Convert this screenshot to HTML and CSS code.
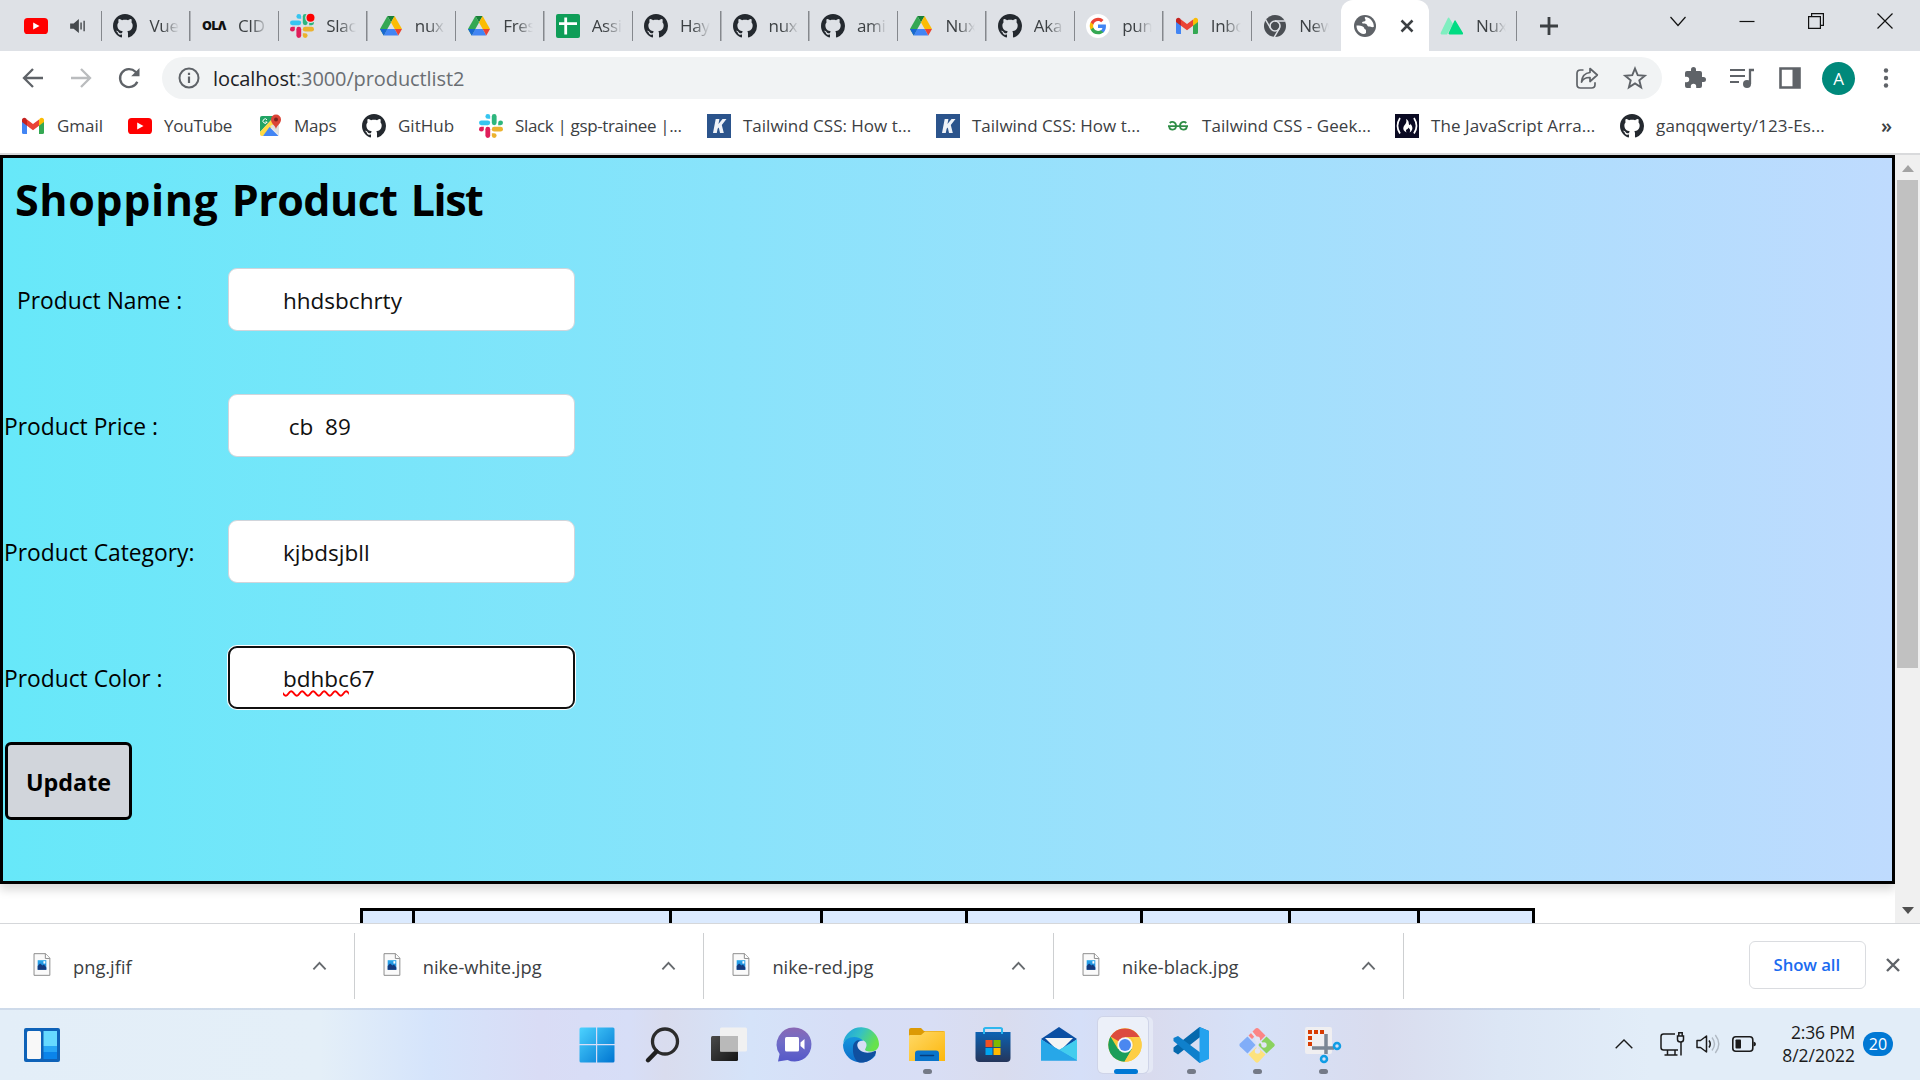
FILE: index.html
```html
<!DOCTYPE html>
<html lang="en">
<head>
<meta charset="utf-8">
<title>localhost:3000/productlist2</title>
<link rel="stylesheet" href="styles.css">
</head>
<body>
<svg class="defs" width="0" height="0" aria-hidden="true">
  <defs>
    <linearGradient id="g-win" x1="0" y1="0" x2="1" y2="1"><stop offset="0" stop-color="#4cd3ff"/><stop offset="1" stop-color="#0075d1"/></linearGradient>
    <linearGradient id="g-dark" x1="0" y1="0" x2="1" y2="1"><stop offset="0" stop-color="#4a4a4a"/><stop offset="1" stop-color="#151515"/></linearGradient>
    <linearGradient id="g-chat" x1="0" y1="0" x2="0" y2="1"><stop offset="0" stop-color="#8a68b4"/><stop offset=".45" stop-color="#6f6cc8"/><stop offset="1" stop-color="#5558c8"/></linearGradient>
    <linearGradient id="g-edge" x1="0" y1="0" x2="1" y2=".4"><stop offset="0" stop-color="#1b9de2"/><stop offset=".5" stop-color="#35c1c4"/><stop offset="1" stop-color="#66e24c"/></linearGradient>
    <linearGradient id="g-edge2" x1="0" y1="0" x2="0" y2="1"><stop offset="0" stop-color="#1595dd"/><stop offset="1" stop-color="#0c6cc9"/></linearGradient>
    <linearGradient id="g-folder" x1="0" y1="0" x2="1" y2="1"><stop offset="0" stop-color="#ffd968"/><stop offset="1" stop-color="#fcb70c"/></linearGradient>
    <linearGradient id="g-store" x1="0" y1="0" x2="0" y2="1"><stop offset="0" stop-color="#0c62b3"/><stop offset="1" stop-color="#25355a"/></linearGradient>
    <linearGradient id="g-mail" x1="0" y1="0" x2="1" y2="1"><stop offset="0" stop-color="#37c2f3"/><stop offset="1" stop-color="#1b86dc"/></linearGradient>
    <linearGradient id="g-pic" x1="0" y1="0" x2="0" y2="1"><stop offset="0" stop-color="#29a8ec"/><stop offset="1" stop-color="#1577cf"/></linearGradient>
    <symbol id="youtube" viewBox="0 0 24 24"><rect y="4" width="24" height="16" rx="3.6" fill="#f00"/><path d="M9.2 8.6v6.8l6.3-3.4z" fill="#fff"/></symbol>
    <symbol id="github" viewBox="0 0 16 16"><path fill="#24292f" d="M8 0C3.58 0 0 3.58 0 8c0 3.54 2.29 6.53 5.47 7.59.4.07.55-.17.55-.38 0-.19-.01-.82-.01-1.49-2.01.37-2.53-.49-2.69-.94-.09-.23-.48-.94-.82-1.13-.28-.15-.68-.52-.01-.53.63-.01 1.08.58 1.23.82.72 1.21 1.87.87 2.33.66.07-.52.28-.87.51-1.07-1.78-.2-3.64-.89-3.64-3.95 0-.87.31-1.59.82-2.15-.08-.2-.36-1.02.08-2.12 0 0 .67-.21 2.2.82.64-.18 1.32-.27 2-.27s1.36.09 2 .27c1.53-1.04 2.2-.82 2.2-.82.44 1.1.16 1.92.08 2.12.51.56.82 1.27.82 2.15 0 3.07-1.87 3.75-3.65 3.95.29.25.54.73.54 1.48 0 1.07-.01 1.93-.01 2.2 0 .21.15.46.55.38A8.01 8.01 0 0 0 16 8c0-4.42-3.58-8-8-8z"/></symbol>
    <symbol id="slack" viewBox="0 0 24 24"><g fill="#36c5f0"><path d="M8.8 0a2.4 2.4 0 0 0 0 4.8h2.4V2.4A2.4 2.4 0 0 0 8.8 0z"/><rect y="6.4" width="11.2" height="4.8" rx="2.4"/></g><g fill="#2eb67d"><path d="M24 8.8a2.4 2.4 0 0 0-4.8 0v2.4h2.4A2.4 2.4 0 0 0 24 8.8z"/><rect x="12.8" width="4.8" height="11.2" rx="2.4"/></g><g fill="#ecb22e"><path d="M15.2 24a2.4 2.4 0 0 0 0-4.8h-2.4v2.4a2.4 2.4 0 0 0 2.4 2.4z"/><rect x="12.8" y="12.8" width="11.2" height="4.8" rx="2.4"/></g><g fill="#e01e5a"><path d="M0 15.2a2.4 2.4 0 0 0 4.8 0v-2.4H2.4A2.4 2.4 0 0 0 0 15.2z"/><rect x="6.4" y="12.8" width="4.8" height="11.2" rx="2.4"/></g></symbol>
    <symbol id="drive" viewBox="0 0 24 24"><path d="M8.4 2h7.2L12 8.6z" fill="#188038"/><path d="M8.4 2 12 8.600 4.700 21.400 1 15z" fill="#34a853"/><path d="M15.600 2 23 15h-7.300L12 8.600z" fill="#fbbc04"/><path d="M8.400 15h7.300l3.600 6.400H4.700z" fill="#4285f4"/><path d="M8.400 15H1l3.700 6.400z" fill="#1967d2"/><path d="M15.700 15H23l-3.700 6.400z" fill="#ea4335"/></symbol>
    <symbol id="sheet" viewBox="0 0 24 24"><rect width="24" height="24" rx="2" fill="#0f9d58"/><path d="M9.7 3.5v17M3 9.700h18" stroke="#fff" stroke-width="2.800"/></symbol>
    <symbol id="google" viewBox="0 0 24 24"><circle cx="12" cy="12" r="12" fill="#fff"/><g transform="translate(3 3) scale(.75)"><path fill="#4285f4" d="M22.600 12.300c0-.8-.1-1.600-.2-2.300H12v4.500h5.900a5.100 5.100 0 0 1-2.200 3.300v2.800h3.600c2.100-1.900 3.300-4.800 3.300-8.300z"/><path fill="#34a853" d="M12 23c3 0 5.500-1 7.300-2.700l-3.600-2.800c-1 .7-2.200 1.100-3.700 1.100-2.900 0-5.300-1.900-6.200-4.500H2.200V17A11 11 0 0 0 12 23z"/><path fill="#fbbc05" d="M5.800 14.100a6.600 6.600 0 0 1 0-4.200V7.100H2.200a11 11 0 0 0 0 9.900z"/><path fill="#ea4335" d="M12 5.400c1.600 0 3.100.6 4.200 1.600l3.200-3.100A11 11 0 0 0 2.200 7.100l3.600 2.800C6.700 7.300 9.100 5.400 12 5.400z"/></g></symbol>
    <symbol id="gmail" viewBox="0 0 24 24"><path d="M1 6v12.500A1.500 1.500 0 0 0 2.500 20H6V9.500z" fill="#4285f4"/><path d="M18 9.500V20h3.500a1.500 1.500 0 0 0 1.500-1.500V6z" fill="#34a853"/><path d="M18 5.500v6.300L23 8V6c0-2-2.200-3-3.800-1.800z" fill="#fbbc04"/><path d="M6 11.800V5.500l6 4.500 6-4.500v6.300l-6 4.500z" fill="#ea4335"/><path d="M1 6v2l5 3.800V5.500L4.800 4.200C3.200 3 1 4 1 6z" fill="#c5221f"/></symbol>
    <symbol id="chrome-gray" viewBox="0 0 24 24"><circle cx="12" cy="12" r="11" fill="#4b4f54"/><circle cx="12" cy="12" r="5" fill="none" stroke="#dee1e6" stroke-width="1.600"/><path d="M12 7h10M7.700 14.500l-5-8.700M16.300 14.500l-5 8.700" stroke="#dee1e6" stroke-width="1.500"/></symbol>
    <symbol id="globe" viewBox="0 0 24 24"><circle cx="12" cy="12" r="11" fill="#5f6368"/><path fill="#fff" d="M3.500 11.500c3 .2 5.500 0 7 1.500 1 1 .5 2.200 2 2.500.8.200.5 2 .5 3.500-2 2.500-7 0-8.500-3-.8-1.500-1-3-1-4.500zM12 3c-1 1.500 1 2 .5 3.500s-3 .5-3.500 2c0 1.500 2.500 1 4 1.500s1 2.500 3 2.500 2 1 4.800.5c.4-4.500-3.300-9.800-8.800-10z"/></symbol>
    <symbol id="nuxt" viewBox="0 0 24 24"><path d="M9 3.500 13 10 7 20.500H1.500Q0 20 .8 18.500L7.600 4.500Q8.300 3.200 9 3.500z" fill="#80eec0"/><path d="M15.500 6.500 23 19q.5 1.500-1 1.500H9.500Q8 20 8.700 18.800L14.300 7q.600-1 1.200-.5z" fill="#00dc82"/></symbol>
    <symbol id="maps" viewBox="0 0 24 24"><rect x="2" y="2" width="19" height="20" rx="2" fill="#eee"/><path d="M4 2h13L2 18V4q0-2 2-2z" fill="#21a464"/><path d="M2 18 15 4l4 4L5 22H4q-2 0-2-2z" fill="#ffda45"/><path d="m11.500 13 9 9H5z" fill="#4285f4"/><path d="m12 12 9-4v13z" fill="#e0e0e0"/><path d="M18 15c-.7-4-5-5-5-9.500a5 5 0 0 1 10 0C23 10 18.700 11 18 15z" fill="#db4437"/><circle cx="18" cy="5.500" r="2" fill="#7b231e"/><path d="M9 5.800A2.200 2.200 0 1 0 9.200 8H7.300" fill="none" stroke="#fff"/></symbol>
    <symbol id="kinsta" viewBox="0 0 24 24"><rect width="24" height="24" fill="#2b548c"/><path d="M8.700 5h3.700l-.9 5 4-5h4l-4.700 5.900 2 8.100h-3.800l-1.200-5.500-1.200 1.200-.8 4.300H6z" fill="#eef2f7"/></symbol>
    <symbol id="gfg" viewBox="0 0 24 24"><path d="M2 12.200h20M3.700 9c2-2 6.300-1.300 6.300 2.800 0 5-6.300 5-6.800.8M20.300 9c-2-2-6.300-1.300-6.300 2.800 0 5 6.300 5 6.800.8" fill="none" stroke="#2f8d46" stroke-width="1.800"/></symbol>
    <symbol id="fcc" viewBox="0 0 24 24"><rect width="24" height="24" fill="#0a0a23"/><path d="M5 4q-5 8 0 15.500M19 4q5 8 0 15.500" fill="none" stroke="#fff" stroke-width="1.700"/><path d="M11 5c4 2 2 5 3.500 6 .8.300 1-.7.800-1.500 4 5 1.500 7.500-.7 9 1.300-2.700 0-3.800-1.300-5 .2 2-2.500 1.300-2.300 3.300 0 .8.300 1.300.7 1.700-3.700-1.500-4.400-4.500-2-7.500 1.800-2.300 2.100-3.500 1.300-6z" fill="#fff"/></symbol>
    <symbol id="picture" viewBox="0 0 18 24"><path d="M.7.700h12l4.500 4.700v17.900H.7z" fill="#fafafa" stroke="#8a8a8a"/><path d="M12.500.700v5h4.700" fill="#fff" stroke="#8a8a8a"/><path d="M4.500 7.500h9v10h-9z" fill="url(#g-pic)"/><path d="M4.500 13.500 7 11l2.500 2 1.500-1 2.500 3v2.500h-9z" fill="#153a7c"/><rect x="10.500" y="8.500" width="2" height="2.500" fill="#fff"/></symbol>
    <symbol id="chevron" viewBox="0 0 16 10"><path d="m1.500 8.700 6.500-7 6.500 7" fill="none" stroke="#666a6e" stroke-width="2"/></symbol>
  </defs>
</svg>

<div class="screen">
  <header class="tabs">
    <div class="tab first"><svg class="fav"><use href="#youtube"/></svg><svg class="sound" viewBox="0 0 18 16"><path d="M0 5h4l6-5v16l-6-5H0z" fill="#45494d"/><path d="M12.500 4v8M16 2v12" stroke="#45494d" stroke-width="1.600"/></svg></div>
    <div class="tab"><svg class="fav"><use href="#github"/></svg><span class="tab-name">Vue</span></div>
    <div class="tab"><span class="fav ola">OLΛ</span><span class="tab-name">CID</span></div>
    <div class="tab"><svg class="fav" viewBox="0 0 24 24"><use href="#slack"/><circle cx="20.500" cy="3.700" r="5.300" fill="#dee1e6"/><circle cx="20.500" cy="3.700" r="4" fill="#f00"/></svg><span class="tab-name">Slac</span></div>
    <div class="tab"><svg class="fav"><use href="#drive"/></svg><span class="tab-name">nux</span></div>
    <div class="tab"><svg class="fav"><use href="#drive"/></svg><span class="tab-name">Fres</span></div>
    <div class="tab"><svg class="fav"><use href="#sheet"/></svg><span class="tab-name">Assi</span></div>
    <div class="tab"><svg class="fav"><use href="#github"/></svg><span class="tab-name">Hay</span></div>
    <div class="tab"><svg class="fav"><use href="#github"/></svg><span class="tab-name">nux</span></div>
    <div class="tab"><svg class="fav"><use href="#github"/></svg><span class="tab-name">ami</span></div>
    <div class="tab"><svg class="fav"><use href="#drive"/></svg><span class="tab-name">Nux</span></div>
    <div class="tab"><svg class="fav"><use href="#github"/></svg><span class="tab-name">Aka</span></div>
    <div class="tab"><svg class="fav"><use href="#google"/></svg><span class="tab-name">pun</span></div>
    <div class="tab"><svg class="fav"><use href="#gmail"/></svg><span class="tab-name">Inbo</span></div>
    <div class="tab plain"><svg class="fav"><use href="#chrome-gray"/></svg><span class="tab-name">New</span></div>
    <div class="tab active"><svg class="fav"><use href="#globe"/></svg><svg class="close" viewBox="0 0 14 14"><path d="m1.500 1.500 11 11m0-11-11 11" stroke="#3c4043" stroke-width="2.500"/></svg></div>
    <div class="tab"><svg class="fav"><use href="#nuxt"/></svg><span class="tab-name">Nux</span></div>
    <svg class="plus" viewBox="0 0 18 18"><path d="M9 0v18M0 9h18" stroke="#3c4043" stroke-width="2.800"/></svg>
    <div class="window-buttons">
      <svg viewBox="0 0 16 16"><path d="m.5 4 7.500 8.500L15.500 4" fill="none" stroke="#111" stroke-width="1.200"/></svg>
      <svg viewBox="0 0 16 16"><path d="M.5 8.500h15" stroke="#111" stroke-width="1.200"/></svg>
      <svg viewBox="0 0 16 16"><path d="M.6 3.600h11.800v11.800H.6zM3.600 3.600v-3h11.800v11.800h-3" fill="none" stroke="#111" stroke-width="1.200"/></svg>
      <svg viewBox="0 0 16 16"><path d="m.5.500 15 15m0-15-15 15" stroke="#111" stroke-width="1.200"/></svg>
    </div>
  </header>

  <nav class="toolbar">
    <div class="nav-buttons">
      <svg viewBox="0 0 24 24"><path d="M22 12H3.500M12 3l-9 9 9 9" fill="none" stroke="#5f6368" stroke-width="2.300"/></svg>
      <svg viewBox="0 0 24 24"><path d="M2 12h18.500M12 3l9 9-9 9" fill="none" stroke="#babcbe" stroke-width="2.300"/></svg>
      <svg viewBox="0 0 24 24"><path d="M20.300 15.800A9 9 0 1 1 18.500 5.800L21 8.300" fill="none" stroke="#5f6368" stroke-width="2.300"/><path d="M22.500 2v8.300h-8.300z" fill="#5f6368"/></svg>
    </div>
    <div class="omnibox">
      <svg class="info" viewBox="0 0 22 22"><circle cx="11" cy="11" r="9.500" fill="none" stroke="#5f6368" stroke-width="2"/><path d="M11 9.500V16M11 5.700V8" stroke="#5f6368" stroke-width="2.200"/></svg>
      <span class="url"><b>localhost</b>:3000/productlist2</span>
      <svg class="share" viewBox="0 0 24 24"><path d="M8.500 4H5.500Q2 4 2 7.500v11Q2 22 5.500 22h11q3.500 0 3.500-3.500v-2.300" fill="none" stroke="#5f6368" stroke-width="1.700"/><path d="M15 2.500 22.300 9 15 15.500v-4C10.500 11.300 8 13 6.500 16 7 10.500 10 7 15 6.500z" fill="none" stroke="#5f6368" stroke-width="1.700" stroke-linejoin="round"/></svg>
      <svg class="star" viewBox="0 0 24 24"><path d="m12 2.500 2.700 6.700 7.100.5-5.500 4.600 1.800 7L12 17.400l-6.100 3.900 1.800-7-5.500-4.600 7.100-.5z" fill="none" stroke="#5f6368" stroke-width="1.900"/></svg>
    </div>
    <div class="actions">
      <svg viewBox="0 0 24 24"><path d="M20.500 11H19V7a2 2 0 0 0-2-2h-4V3.500a2.500 2.500 0 0 0-5 0V5H4a2 2 0 0 0-2 2v3.800h1.500a2.700 2.700 0 0 1 0 5.400H2V20a2 2 0 0 0 2 2h3.800v-1.500a2.700 2.700 0 0 1 5.400 0V22H17a2 2 0 0 0 2-2v-4h1.500a2.500 2.500 0 0 0 0-5z" fill="#5f6368"/></svg>
      <svg viewBox="0 0 24 24"><path d="M0 4h15M0 10h15M0 16h9" stroke="#5f6368" stroke-width="2.200"/><path d="M20 18V4h4" fill="none" stroke="#5f6368" stroke-width="2.300"/><circle cx="17" cy="18" r="4" fill="#5f6368"/></svg>
      <svg viewBox="0 0 24 24"><path d="M2.500 2.500h19v19h-19z" fill="none" stroke="#5f6368" stroke-width="2.600"/><path d="M14.500 2H22v20h-7.500z" fill="#5f6368"/></svg>
      <span class="avatar">A</span>
      <svg viewBox="0 0 24 24"><g fill="#5f6368"><circle cx="12" cy="4.500" r="2.200"/><circle cx="12" cy="12" r="2.200"/><circle cx="12" cy="19.500" r="2.200"/></g></svg>
    </div>
  </nav>

  <nav class="bookmarks">
    <a><svg class="fav"><use href="#gmail"/></svg><span>Gmail</span></a>
    <a class="tight"><svg class="fav"><use href="#youtube"/></svg><span>YouTube</span></a>
    <a class="tight"><svg class="fav"><use href="#maps"/></svg><span>Maps</span></a>
    <a><svg class="fav"><use href="#github"/></svg><span>GitHub</span></a>
    <a class="tighter"><svg class="fav"><use href="#slack"/></svg><span>Slack | gsp-trainee |...</span></a>
    <a><svg class="fav"><use href="#kinsta"/></svg><span>Tailwind CSS: How t...</span></a>
    <a><svg class="fav"><use href="#kinsta"/></svg><span>Tailwind CSS: How t...</span></a>
    <a class="loose"><svg class="fav"><use href="#gfg"/></svg><span>Tailwind CSS - Geek...</span></a>
    <a class="loose"><svg class="fav"><use href="#fcc"/></svg><span>The JavaScript Arra...</span></a>
    <a class="looser"><svg class="fav"><use href="#github"/></svg><span>ganqqwerty/123-Es...</span></a>
    <span class="more">»</span>
  </nav>

  <div class="viewport">
    <main class="page">
      <section class="panel">
        <h1><span class="w1">Shopping</span> <span class="w2">Product</span> <span class="w3">List</span></h1>
        <div class="row name"><label>Product Name :</label><div class="field">hhdsbchrty</div></div>
        <div class="row"><label>Product Price :</label><div class="field"> cb  89</div></div>
        <div class="row"><label>Product Category:</label><div class="field">kjbdsjbll</div></div>
        <div class="row"><label>Product Color :</label><div class="field focused"><span class="typo">bdhbc</span>67</div></div>
        <button class="update">Update</button>
      </section>
      <div class="table"><i></i><i></i><i></i><i></i><i></i><i></i><i></i><i></i></div>
    </main>
    <div class="scrollbar">
      <svg viewBox="0 0 12 7"><path d="M6 0l6 7H0z" fill="#a3a3a3"/></svg>
      <div class="thumb"></div>
      <svg viewBox="0 0 12 7"><path d="M0 0h12L6 7z" fill="#505050"/></svg>
    </div>
  </div>

  <section class="downloads">
    <div class="download"><svg class="file"><use href="#picture"/></svg><span>png.jfif</span><svg class="chev"><use href="#chevron"/></svg></div>
    <div class="download"><svg class="file"><use href="#picture"/></svg><span>nike-white.jpg</span><svg class="chev"><use href="#chevron"/></svg></div>
    <div class="download"><svg class="file"><use href="#picture"/></svg><span>nike-red.jpg</span><svg class="chev"><use href="#chevron"/></svg></div>
    <div class="download"><svg class="file"><use href="#picture"/></svg><span>nike-black.jpg</span><svg class="chev"><use href="#chevron"/></svg></div>
    <button class="show-all">Show all</button>
    <svg class="dismiss" viewBox="0 0 14 14"><path d="m1 1 12 12M13 1 1 13" stroke="#5f6368" stroke-width="2.400"/></svg>
  </section>

  <footer class="taskbar">
    <svg class="widgets" viewBox="0 0 36 36"><rect x="0" y="1" width="36" height="34" rx="2" fill="#0e62b8"/><rect x="3" y="4" width="14" height="28" rx="1.500" fill="#f8f8f8"/><path d="M19.500 4H33v15H19.500z" fill="#66d9ff"/><path d="M19.500 19H33v6H19.500z" fill="#26a5f5"/><path d="M19.500 25H33v7H19.500z" fill="#0a84ea"/></svg>
    <div class="apps">
      <div class="app"><svg viewBox="0 0 36 36"><path d="M2 .500h15v16.500H.5V2Q.5.500 2 .500zM18.200.500H34q1.500 0 1.500 1.500v15H18.200zM.5 18.200H17v17.300H2Q.5 35.500.5 34zM18.200 18.200h17.300V34q0 1.500-1.500 1.500H18.200z" fill="url(#g-win)"/></svg></div>
      <div class="app"><svg viewBox="0 0 36 36"><circle cx="20" cy="14.500" r="12.500" fill="none" stroke="#2b2b2b" stroke-width="3.300"/><path d="m11.500 24.500-8.500 8.700" stroke="#202020" stroke-width="4.500" stroke-linecap="round"/></svg></div>
      <div class="app"><svg viewBox="0 0 36 36"><rect y="9" width="27" height="25" rx="1.500" fill="url(#g-dark)"/><rect x="9" y=".5" width="27" height="24" rx="1.500" fill="#f1f1f1"/><path d="M9 9h18v15.500H9z" fill="#b9b9b9"/></svg></div>
      <div class="app"><svg viewBox="0 0 36 36"><path d="M17.500.500a17 17 0 1 1-7 32.500l-9.500 1.500 1.600-7.500A17 17 0 0 1 17.500.500z" fill="url(#g-chat)"/><rect x="8" y="10" width="14" height="14.500" rx="1.500" fill="#fff"/><path d="M23.500 15.500 27.500 12v10.500L23.500 19z" fill="#fff"/></svg></div>
      <div class="app"><svg viewBox="0 0 36 36"><path d="M.2 16A18 18 0 0 1 36 17c0 5-4 7.500-8.500 7.500-4 0-6.500-1.200-5-3 2.500-4 .5-8.500-5-8.500C10 10 3 12 .2 16z" fill="url(#g-edge)"/><path d="M0 18C1.500 10 14 7 20.500 14c-5-1-8 3-7 8 1.500 6 9 8 19.500 5.500A18 18 0 0 1 0 18z" fill="url(#g-edge2)"/><path d="M10 20c0-4 3.500-7.500 7-7-4 3-3.500 8 1 11 4.500 2.500 9.500 2 14.500-.2 1 .7.500 2.700-.5 4C28 34 20 37 15 35c-4-3-5.500-9-5-15z" fill="#104f9f"/></svg></div>
      <div class="app open"><svg viewBox="0 0 36 36"><path d="M0 3q0-2 2-2h10l3 3h19q2 0 2 2v5H0z" fill="#dc9a05"/><path d="M0 9q0-1 1-1h11l4-3.500h20V34H0z" fill="url(#g-folder)"/><path d="M6 34v-7.500q0-3 3-3h18q3 0 3 3V34z" fill="#0a74ca"/><path d="M11.500 28.500h13" stroke="#063d7c" stroke-width="1.500" stroke-linecap="round"/></svg></div>
      <div class="app"><svg viewBox="0 0 36 36"><path d="M9 8V2.500Q9 1 10.500 1h15Q27 1 27 2.500V8" fill="none" stroke="#2eb7ee" stroke-width="2"/><path d="M.5 5h35v26q0 4-4 4h-27q-4 0-4-4z" fill="url(#g-store)"/><path d="M9 1.500V7M27 1.500V7" stroke="#28b6ef" stroke-width="2"/><path d="M10.500 13h7v7h-7z" fill="#f25022"/><path d="M18.500 13h7v7h-7z" fill="#7fba00"/><path d="M10.500 21h7v7h-7z" fill="#00a4ef"/><path d="M18.500 21h7v7h-7z" fill="#ffb900"/></svg></div>
      <div class="app"><svg viewBox="0 0 36 36"><path d="M0 12 18 0l18 12-18 14z" fill="#0b4fa3"/><path d="M4 11h28L18 25z" fill="#f5f5f5"/><path d="M0 12.500v21h36v-21L18 23z" fill="url(#g-mail)"/><path d="M18 23l18-10.500V33.500z" fill="#42cdee"/><path d="m0 12.500 18 10.200 18 10.800H0z" fill="#27a7e8"/></svg></div>
      <div class="app open current"><svg viewBox="0 0 36 36"><circle cx="18" cy="18" r="16.700" fill="#fbc83a"/><path d="M18 18 3.500 9.600A16.700 16.700 0 0 1 32.500 10H18z" fill="#dc4b3e"/><path d="M3.500 9.600a16.700 16.700 0 0 0 14 25.100L25 22l-14 0z" fill="#1b9e5a"/><path d="M25 22a8 8 0 0 0-1-12h8.500a16.700 16.700 0 0 1-15 24.700z" fill="#fdce45"/><circle cx="18" cy="18" r="7.700" fill="#f4f6fa"/><circle cx="18" cy="18" r="6" fill="#4a87f0"/></svg></div>
      <div class="app open"><svg viewBox="0 0 36 36"><path d="m26.500 0 9.500 4-9.500 6.500L5 27.500l-4.500-3v-4z" fill="#0669ad"/><path d="m5 9 21.500 16L36 31l-9.500 5L.5 14v-3z" fill="#0f80cc"/><path d="M26.500 0 36 4v28l-9.500 4z" fill="#24a2ee"/></svg></div>
      <div class="app open"><svg viewBox="0 0 36 36"><path d="M9.500 8.500 16 2q2-2 4 0l6.500 6.500L20 15 15.500 9.500 13 12z" fill="#fb8585"/><path d="m8.500 9.500 8 8.500-8 8.500L1 19.500q-1.500-1.500 0-3z" fill="#81adf8"/><path d="m27.500 9.500 7.500 7q1.500 1.500 0 3l-7.500 7L19 18z" fill="#8bd25f"/><path d="m18 19.500 8.500 8L19.500 35q-1.500 1.500-3 0l-7-7.500z" fill="#fde27e"/><path d="m12.500 5 6 7v12M18.500 12l6 6" fill="none" stroke="#e2e5f4" stroke-width="2"/><g fill="#e2e5f4"><circle cx="18.500" cy="12" r="2.500"/><circle cx="18.500" cy="24" r="2.700"/><circle cx="25" cy="18" r="2.700"/></g></svg></div>
      <div class="app open"><svg viewBox="0 0 36 36"><rect width="27" height="27" rx="2" fill="#f0eff1"/><path d="M3 5h16M5 9v10" fill="none" stroke="#d83b01" stroke-width="4" stroke-dasharray="4 2"/><path d="M21 7v20M7 21h22" stroke="#7c8794" stroke-width="3.500"/><circle cx="32" cy="19" r="3" fill="none" stroke="#109de5" stroke-width="2.500"/><circle cx="19" cy="32" r="3" fill="none" stroke="#109de5" stroke-width="2.500"/></svg></div>
    </div>
    <div class="tray">
      <svg class="up" viewBox="0 0 18 10"><path d="M.7 9.300 9 1l8.300 8.300" fill="none" stroke="#1b1b1b" stroke-width="1.400"/></svg>
      <svg viewBox="0 0 24 24"><g fill="none" stroke="#1b1b1b" stroke-width="1.500"><path d="M15 2H3.500Q1 2 1 4.500v11Q1 18 3.500 18H18M7.500 18v4.500M15 18v4.500M4.500 23h13M21 10v13.500"/><path d="M17.500 4h6v3.500q0 2.500-3 2.500t-3-2.500zM18.800 4V.8h3.400V4"/></g></svg>
      <svg viewBox="0 0 24 24"><path d="M1 8.500h3.500L10.500 4v16l-6-4.500H1z" fill="none" stroke="#1b1b1b" stroke-width="1.500" stroke-linejoin="round"/><path d="M13 8.500q2.500 3.500 0 7" fill="none" stroke="#1b1b1b" stroke-width="1.500"/><path d="M16 5.500q5 6.500 0 13M19.300 3q7 9 0 18" fill="none" stroke="#b0b9c3" stroke-width="1.400"/></svg>
      <svg viewBox="0 0 24 24"><rect x=".8" y="4.800" width="20" height="14.500" rx="3" fill="none" stroke="#1b1b1b" stroke-width="1.600"/><rect x="3.500" y="7.500" width="5.500" height="9" rx=".8" fill="#1b1b1b"/><path d="M21.500 9.500q2.500.5 2.500 2.500t-2.500 2.500z" fill="#1b1b1b"/></svg>
      <div class="clock"><span>2:36 PM</span><span class="date">8/2/2022</span></div>
      <span class="badge">20</span>
    </div>
  </footer>
</div>
</body>
</html>
```
FILE: styles.css
```css
* { box-sizing: border-box; }

body {
  margin: 0;
  font-family: "Open Sans", "Noto Sans", sans-serif;
  color: #3c4043;
}

svg { display: block; flex: none; overflow: visible; }
.defs { position: absolute; }

.screen {
  display: flex;
  flex-direction: column;
  width: 1920px;
  height: 1080px;
  overflow: hidden;
  background: #fff;
}

.fav { width: 24px; height: 24px; flex: none; }

/* Tab strip */
.tabs {
  display: flex;
  height: 51px;
  padding-left: 14px;
  background: #dee1e6;
}

.tab {
  display: flex;
  align-items: center;
  flex: none;
  width: 88.450px;
  padding: 0 0 0 11px;
  gap: 12px;
  background: linear-gradient(#85888d, #85888d) right 11px / 1.500px 30px no-repeat;
}

.tab.first { padding-left: 10px; gap: 22px; }
.tab.plain { background: none; }
.sound { width: 16px; height: 14px; }

.tab-name {
  width: 40px;
  overflow: hidden;
  font-size: 17px;
  line-height: 26px;
  white-space: nowrap;
  letter-spacing: -0.3px;
  -webkit-mask-image: linear-gradient(90deg, #000 13px, transparent 30px);
  mask-image: linear-gradient(90deg, #000 13px, transparent 30px);
}

.ola {
  font: 800 12.500px/24px "Open Sans", sans-serif;
  letter-spacing: -0.7px;
  color: #111;
}

.tab.active {
  gap: 23px;
  padding-left: 12px;
  background: #fff;
  border-radius: 12px 12px 0 0;
}

.close { width: 14px; height: 14px; }
.plus { width: 18px; height: 18px; margin: 17px 0 0 23px; }

.window-buttons {
  display: flex;
  gap: 53px;
  margin: 13px 0 0 112px;
}

.window-buttons svg { width: 16px; height: 16px; }

/* Toolbar */
.toolbar {
  display: flex;
  align-items: center;
  height: 54px;
  background: #fff;
}

.nav-buttons {
  display: flex;
  gap: 24px;
  width: 162px;
  padding-left: 21px;
}

.nav-buttons svg { width: 24px; height: 24px; }

.omnibox {
  display: flex;
  align-items: center;
  width: 1500px;
  height: 42px;
  padding: 0 15px 0 16px;
  border-radius: 21px;
  background: #f1f3f4;
}

.info { width: 22px; height: 22px; }

.url {
  flex: 1;
  margin-left: 13px;
  font-size: 20px;
  letter-spacing: -0.1px;
  color: #6a6e73;
}

.url b { font-weight: 400; color: #202124; }
.share { width: 24px; height: 24px; margin-right: 24px; }
.star { width: 24px; height: 24px; }

.actions {
  display: grid;
  grid-template-columns: 47px 48px 44px 52px 24px;
  align-items: center;
  padding-left: 21px;
}

.actions svg { width: 24px; height: 24px; }

.avatar {
  width: 33px;
  height: 33px;
  border-radius: 50%;
  background: #00897b;
  color: #fff;
  font-size: 17px;
  line-height: 33px;
  text-align: center;
}

/* Bookmarks */
.bookmarks {
  display: grid;
  grid-template-columns: 107px 130px 104px 117px 228px 229px 230px 229px 225px 261px auto;
  align-items: center;
  height: 50px;
  padding: 0 0 7px 21px;
  border-bottom: 2px solid #d9dadc;
  background: #fff;
}

.bookmarks a {
  display: flex;
  align-items: center;
  gap: 12px;
  font-size: 17px;
  line-height: 24px;
  letter-spacing: 0;
  white-space: nowrap;
}

.bookmarks .tight { letter-spacing: -0.250px; }
.bookmarks .tighter { letter-spacing: -0.350px; }
.bookmarks .loose { letter-spacing: 0.070px; }
.bookmarks .looser { letter-spacing: 0.150px; }

.more { font-size: 20px; font-weight: 600; line-height: 24px; }

/* Page area */
.viewport { display: flex; height: 768px; }

.page {
  width: 1895px;
  height: 768px;
  overflow: hidden;
  background: #fff;
}

.panel {
  height: 729px;
  border: 3px solid #000;
  background: linear-gradient(90deg, #67e8f9, #bfdbfe);
  box-shadow: 0 6px 9px rgba(0, 0, 0, 0.150);
  color: #000;
}

h1 {
  margin: 0;
  padding: 11px 0 0 12px;
  height: 110px;
  font-size: 43px;
  line-height: 62px;
  word-spacing: 2px;
}

.w1 { letter-spacing: 0.600px; }
.w2 { letter-spacing: -0.500px; }
.w3 { letter-spacing: -1.500px; }

.row {
  display: grid;
  grid-template-columns: 225px 347px;
  align-items: center;
  height: 63px;
  margin-bottom: 63px;
}

.row label {
  padding: 2px 0 0 1px;
  font-size: 22.800px;
  line-height: 32px;
  white-space: nowrap;
}

.row.name label { padding-left: 14px; }

.field {
  height: 63px;
  padding: 1px 0 0 54px;
  border: 1px solid #d1d5db;
  border-radius: 9px;
  background: #fff;
  font-size: 22.500px;
  line-height: 62px;
  white-space: pre;
  color: #111;
}

.field.focused {
  padding: 1px 0 0 53px;
  border: 2px solid #101010;
  line-height: 60px;
  box-shadow: 0 0 0 1px #fff;
}

.typo {
  text-decoration: underline wavy #f00 1.500px;
  text-underline-offset: 3px;
  text-decoration-skip-ink: none;
}

.update {
  display: block;
  width: 127px;
  height: 78px;
  margin: -30px 0 0 2px;
  padding: 2px 0 0;
  border: 3px solid #000;
  border-radius: 6px;
  background: #d1d5db;
  font: 700 23.300px/70px "Open Sans", sans-serif;
  color: #000;
}

.table {
  display: grid;
  grid-template-columns: 52px 257px 151px 145px 175px 148px 129px 115px;
  width: 1175px;
  height: 40px;
  margin: 24px 0 0 360px;
  border: 3px solid #000;
  border-left: 0;
  background: #dbeafe;
}

.table i { border-left: 3px solid #000; }

.scrollbar {
  display: flex;
  flex-direction: column;
  align-items: center;
  width: 25px;
  padding: 10px 0 9px;
  background: #f0f0f0;
}

.scrollbar svg { width: 12px; height: 7px; }
.thumb { width: 21px; height: 488px; margin: 8px 0 auto; background: #c1c1c1; }

/* Downloads */
.downloads {
  display: flex;
  height: 85px;
  padding-left: 5px;
  border-top: 1px solid #d5d7da;
  background: #fff;
}

.download {
  display: flex;
  align-items: center;
  width: 349.700px;
  height: 66px;
  margin-top: 9px;
  padding: 0 27px 0 28px;
  border-right: 1.500px solid #cdcfd1;
}

.download span {
  flex: 1;
  margin-left: 22px;
  font-size: 18.300px;
  line-height: 26px;
  padding-top: 2px;
}

.file { width: 18px; height: 23px; margin-top: -3px; }
.chev { width: 15px; height: 10px; }

.show-all {
  width: 117px;
  height: 48px;
  margin: 17px 0 0 345px;
  padding: 0 1px 0 0;
  border: 1px solid #dadce0;
  border-radius: 6px;
  background: #fff;
  font: 600 16.800px/44px "Open Sans", sans-serif;
  letter-spacing: -0.1px;
  color: #1a6bf0;
}

.dismiss { width: 14px; height: 14px; margin: 34px 0 0 20px; }

/* Taskbar */
.taskbar {
  display: flex;
  align-items: center;
  height: 72px;
  padding-left: 24px;
  background:
    linear-gradient(rgba(110, 130, 170, 0.180), rgba(110, 130, 170, 0.180)) 0 0 / 1600px 2px no-repeat,
    linear-gradient(90deg, #e3eef8 0, #e4eff8 320px, #d5e4fb 430px, #d9dcf5 540px, #d7def7 630px, #d9dcee 665px, #d5e3f9 750px, #d7def6 850px, #d8def5 930px, #d9dcee 1000px, #d5dff8 1080px, #d9dbee 1150px, #d6e1f8 1250px, #d9dcee 1380px, #dce6f5 1500px, #e2edf8 1650px);
}

.widgets { width: 36px; height: 36px; margin-top: 2px; }

.apps { display: flex; margin-left: 504px; }

.app {
  display: flex;
  position: relative;
  align-items: center;
  justify-content: center;
  width: 66px;
  height: 57px;
  margin-top: 2px;
}

.app > svg { position: relative; width: 36px; height: 36px; }

.app.open::after {
  content: "";
  position: absolute;
  left: 28.500px;
  bottom: 0;
  width: 9px;
  height: 5px;
  border-radius: 3px;
  background: #747a87;
}

.app.current::before {
  content: "";
  position: absolute;
  left: 6px;
  top: 0;
  width: 50px;
  height: 56px;
  border-radius: 5px;
  background: #ecf0f9;
  box-shadow: 0 0 0 1px #cfd4e8, 5px 0 0 #e4e8f5;
}

.app.current::after { left: 22px; width: 24px; background: #0078d4; }

.tray {
  display: flex;
  align-items: center;
  margin-left: 259px;
}

.tray > svg { width: 24px; height: 24px; margin-right: 12px; }
.tray > svg.up { width: 18px; height: 10px; margin-right: 27px; }

.clock {
  display: flex;
  flex-direction: column;
  align-items: flex-end;
  width: 87px;
  font-size: 17.500px;
  line-height: 23px;
  color: #1b1b1b;
  letter-spacing: -0.2px;
}

.date { letter-spacing: 0; }

.badge {
  width: 30px;
  height: 24px;
  margin-left: 8px;
  border-radius: 12px;
  background: #0078d4;
  color: #fff;
  font-size: 16px;
  line-height: 24px;
  text-align: center;
}
```
